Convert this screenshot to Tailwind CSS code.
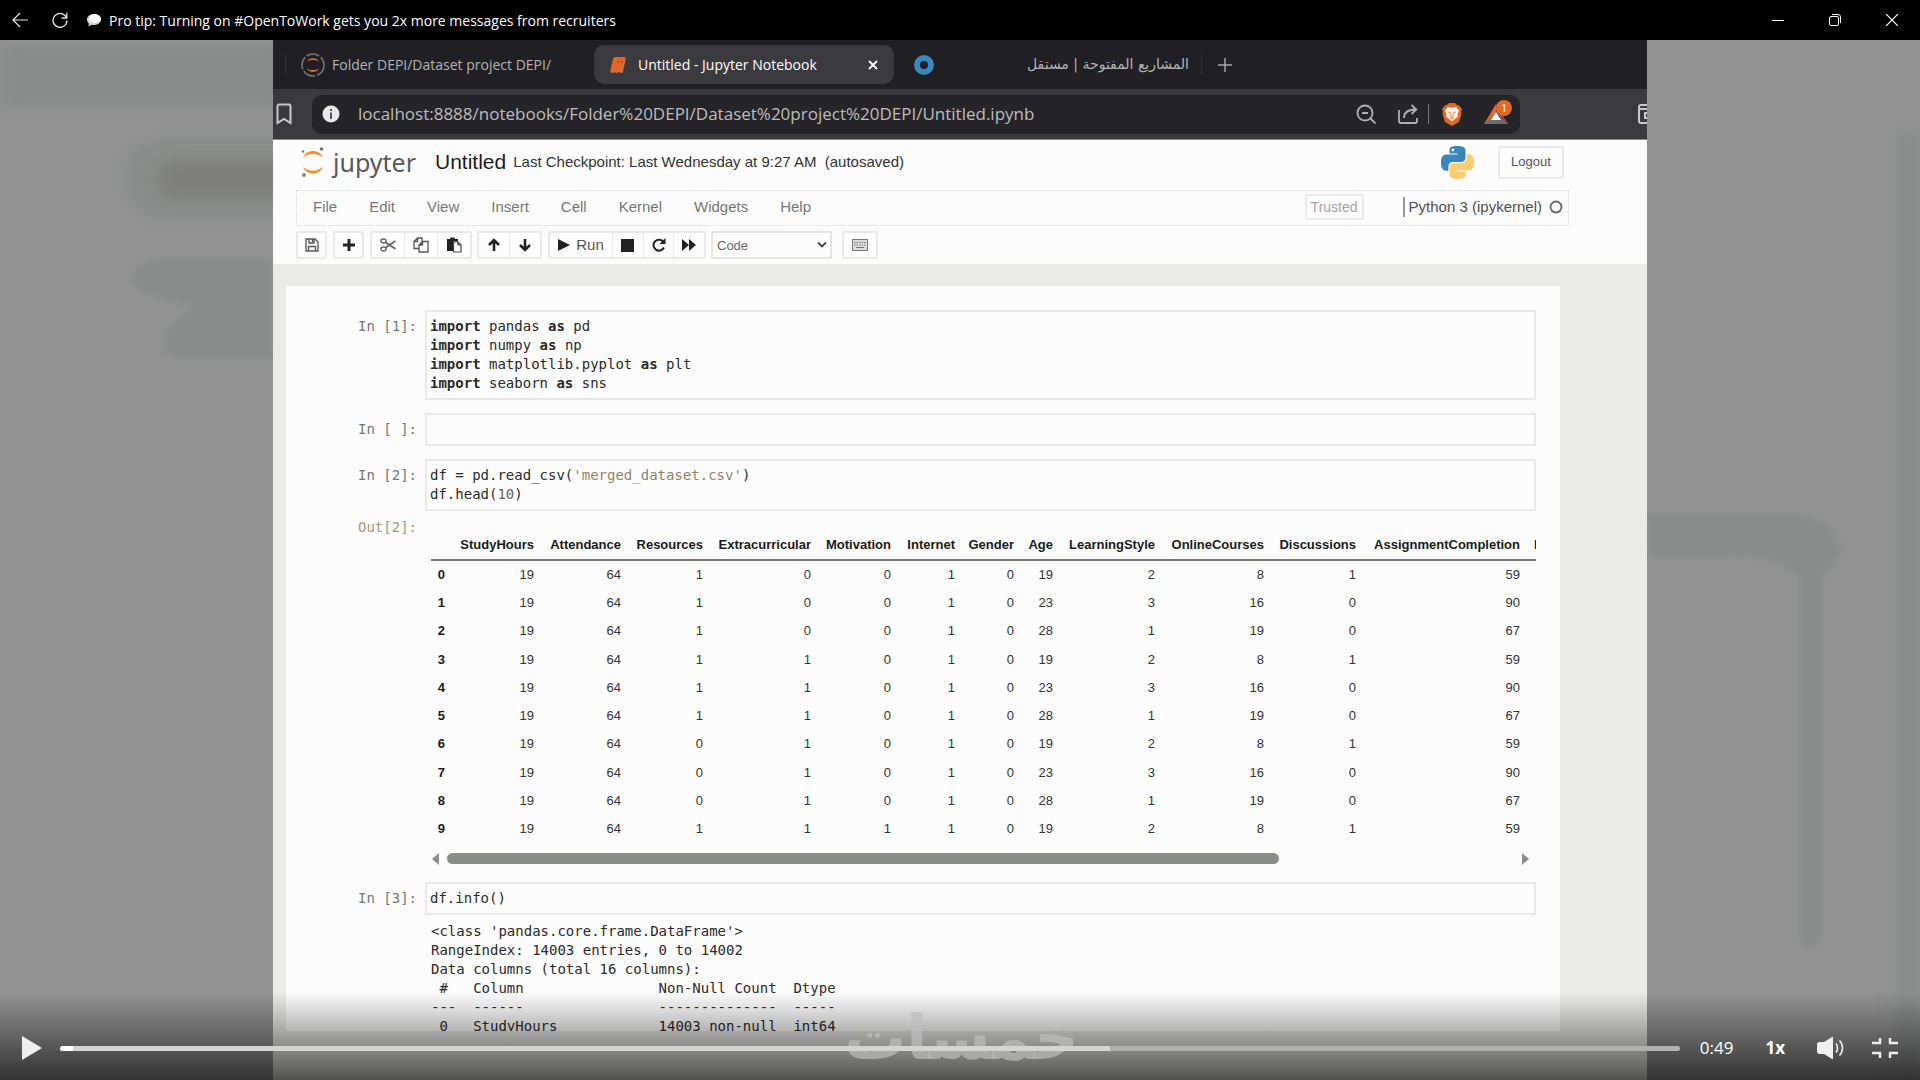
<!DOCTYPE html>
<html lang="en">
<head>
    <meta charset="UTF-8">
    <meta name="viewport" content="width=device-width, initial-scale=1.0">
    <title>Pro tip: Turning on #OpenToWork gets you 2x more messages from recruiters</title>
    <script src="https://cdn.jsdelivr.net/npm/@tailwindcss/browser@4"></script>
</head>
<body class="h-screen flex flex-col bg-black overflow-hidden font-['Open_Sans','Noto_Sans','DejaVu_Sans',sans-serif]">

  <!-- == Window Bar Start == -->
  <header class="h-10 shrink-0 flex items-center text-white">
    <button aria-label="Back" class="w-10 flex justify-center">
      <svg class="size-4" viewBox="0 0 16 16" fill="none" stroke="#e5e5e5" stroke-width="1.2"><path d="M16 8H1M8 1 1 8l7 7"/></svg>
    </button>
    <button aria-label="Reload" class="w-10 flex justify-center">
      <svg class="size-4" viewBox="0 0 16 16" fill="none" stroke="#e5e5e5" stroke-width="1.3"><path d="M14.6 6A7 7 0 1 0 15 8.500M14.800 .8v5.200H9.600"/></svg>
    </button>
    <svg class="size-4 ml-[6px] mr-[7px]" viewBox="0 0 16 16"><path d="M8 2c4 0 7 2.400 7 5.500S12 13 8 13c-.8 0-1.600 0-2.300-.2L2.500 14.500l.3-3C1.600 10.400 1 9 1 7.500 1 4.400 4 2 8 2z" fill="#d4d4d4"/><path d="M8.500 2C5 2 3 4.200 3 6.800c0 2.400 2.600 4 5.400 4S14 9.400 15 7.500C15 4.400 12 2 8.500 2z" fill="#fff"/></svg>
    <h1 class="text-[14px] flex-1">Pro tip: Turning on #OpenToWork gets you 2x more messages from recruiters</h1>
    <button aria-label="Minimize" class="w-[57px] flex justify-center"><svg class="size-3" viewBox="0 0 12 12" stroke="#fff"><path d="M0 6.500h12"/></svg></button>
    <button aria-label="Restore" class="w-[57px] flex justify-center"><svg class="size-3" viewBox="0 0 12 12" fill="none" stroke="#fff"><rect x=".5" y="2.500" width="9" height="9" rx="1.500"/><path d="M3 .5h6a2.500 2.500 0 0 1 2.500 2.500v6"/></svg></button>
    <button aria-label="Close" class="w-[57px] flex justify-center"><svg class="size-3" viewBox="0 0 12 12" fill="none" stroke="#fff" stroke-width="1.200"><path d="m0 0 12 12M12 0 0 12"/></svg></button>
  </header>
  <!-- == Window Bar End == -->

  <main class="relative flex-1 min-h-0 bg-[#939393] overflow-hidden">
    <!-- soft shapes behind the video -->
    <div class="absolute left-0 top-0 w-72 h-18 bg-[#8a8d8b] blur-sm"></div>
    <div class="absolute left-[122px] top-[98px] w-52 h-[82px] rounded-[36px] bg-[#8a8d8b] blur-sm"></div>
    <div class="absolute left-[156px] top-[118px] w-44 h-[42px] rounded-full bg-[#7f807c] blur-sm"></div>
    <svg class="absolute left-0 top-[200px] w-[273px] h-[160px] blur-[3px]" viewBox="0 0 273 160" fill="#8a8d8b"><path d="M273 18H170c-22 0-38 8-40 20 4 14 30 22 64 28-18 12-30 24-32 34 2 16 14 19 28 19h83z"/></svg>
    <svg class="absolute right-0 top-[440px] w-[273px] h-[520px] blur-[3px]" viewBox="0 0 273 520" fill="#8a8d8b"><path d="M0 33h130c38 0 60 14 64 34 0 14-10 22-18 30v360c-4 14-20 14-24 0V97c-12-14-36-19-62-19H0z"/></svg>
    <div class="absolute right-0 top-[86px] w-6 h-full bg-[#8a8d8b] blur-sm"></div>

    <!-- == Video Frame Start == -->
    <section class="relative max-w-[1374px] h-full mx-auto flex flex-col overflow-hidden bg-[#eaeae8]">

      <!-- tabs -->
      <nav class="h-[49px] shrink-0 flex items-center bg-[#201f23] text-[#b4b4b4] text-[14px] font-medium">
        <span class="w-px h-5 ml-3 mr-[15px] bg-[#333237]"></span>
        <a href="#" class="flex items-center w-[293px]">
          <svg class="size-6 mr-[7px]" viewBox="0 0 24 24" fill="none"><circle cx="12" cy="12" r="11" stroke="#77777a" stroke-width="1.500" stroke-dasharray="13 2"/><path d="M5.500 8.500c3-4.500 10-4.500 13 0-4-2-9-2-13 0zM5.500 15.500c3 4.500 10 4.500 13 0-4 2-9 2-13 0z" fill="#e0682b"/></svg>
          Folder DEPI/Dataset project DEPI/
        </a>
        <div class="w-[300px] h-[39px] px-4 flex items-center rounded-[10px] bg-[#3b3a3f] text-white">
          <svg class="size-4 mr-3" viewBox="0 0 16 16"><path d="M5.500 0H14c1.200 0 2 1 1.700 2.200L13 14.500c-.3 1-1 1.500-2 1.500l-2-1-2 1-2-.8-2 .8C1 16 0 15 .3 13.800L3 2C3.300.800 4.200 0 5.500 0z" fill="#e0682b"/><path d="M8 4v2M11.500 4v2" stroke="#8a3c16"/></svg>
          <a href="#" class="flex-1">Untitled - Jupyter Notebook</a>
          <button aria-label="Close tab"><svg class="size-[10px]" viewBox="0 0 10 10" stroke="#fff" stroke-width="1.800"><path d="m1 1 8 8M9 1 1 9"/></svg></button>
        </div>
        <a href="#" class="ml-5 flex items-center w-[275px] justify-between">
          <svg class="size-5" viewBox="0 0 20 20" fill="none"><circle cx="10" cy="10" r="7" stroke="#3987bd" stroke-width="6"/></svg>
          <span dir="rtl" class="font-['DejaVu_Sans',sans-serif]">المشاريع المفتوحة | مستقل</span>
        </a>
        <span class="w-px h-5 ml-3 bg-[#333237]"></span>
        <button aria-label="New tab" class="ml-4"><svg class="size-[14px]" viewBox="0 0 14 14" stroke="#a5a5a5" stroke-width="1.500"><path d="M7 0v14M0 7h14"/></svg></button>
      </nav>

      <!-- address bar -->
      <div class="h-[51px] shrink-0 flex items-center bg-[#3a393e] border-b border-[#8b8b8b]">
        <button aria-label="Bookmark" class="w-[39px] pl-[3px]"><svg class="w-4 h-[22px]" viewBox="0 0 16 22" fill="none" stroke="#c9c9c9" stroke-width="2"><path d="M3 1.500h10a1.500 1.500 0 0 1 1.500 1.500v17L8 16l-6.500 4V3A1.500 1.500 0 0 1 3 1.500z"/></svg></button>
        <div class="w-[1208px] h-[39px] pl-[10px] pr-3 flex items-center rounded-[10px] bg-[#252429]">
          <svg class="size-[18px] mr-[18px]" viewBox="0 0 18 18"><circle cx="9" cy="9" r="8.500" fill="#e9e9e7"/><path d="M9 4v2M9 7.500V14" stroke="#55555a" stroke-width="2"/></svg>
          <input aria-label="Address" value="localhost:8888/notebooks/Folder%20DEPI/Dataset%20project%20DEPI/Untitled.ipynb" class="flex-1 min-w-0 bg-transparent text-[17px] text-[#bdbdbd] outline-none">
          <svg class="size-5 mr-[22px]" viewBox="0 0 20 20" fill="none" stroke="#b0b0b0" stroke-width="1.800"><circle cx="9" cy="9" r="7.500"/><path d="m14.500 14.500 5 5M6 9h6"/></svg>
          <svg class="size-5 mr-[10px]" viewBox="0 0 20 20" fill="none" stroke="#b0b0b0" stroke-width="1.800"><path d="M1 6v11a2 2 0 0 0 2 2h14a2 2 0 0 0 2-2v-3M6 14c0-6 4-8.500 12-8.500M13.500 1l4.800 4.500-4.800 4.500"/></svg>
          <span class="w-px h-5 mr-[13px] bg-[#77777a]"></span>
          <svg class="w-5 h-[23px] mr-[22px]" viewBox="0 0 20 23"><path d="m5 2 2-2h6l2 2 2 .5L20 6l-1 3 .5 2-2.500 8-7 4-7-4L.5 11 1 9 0 6l3-3.500z" fill="#e0682b"/><path d="m6 4 4 .8L14 4l3 3.500-1.500 4 .5 2-3 2.500-3 2.500L7 16l-3-2.500.5-2L3 7.500z" fill="#f6efe6"/><path d="m6 9 2.500 1L9 13l1 2 1-2 .5-3L14 9M8 16l2-1 2 1" fill="none" stroke="#e8a35c" stroke-width="1.200"/></svg>
          <span class="relative">
            <svg class="w-6 h-5" viewBox="0 0 24 20"><path d="M12 0 0 20l5-1 7-11z" fill="#e0682b"/><path d="M12 0v8l7 11 5 1z" fill="#8a4a55"/><path d="m0 20 6-5h12l6 5z" fill="#6c6c70"/><path d="m12 8 5 8H7z" fill="#fff"/></svg>
            <span class="absolute -top-1 left-3 size-4 rounded-full bg-[#e0682b] text-[10px] leading-4 text-center text-white">1</span>
          </span>
        </div>
        <span class="flex-1"></span>
        <svg class="w-[9px] h-5" viewBox="0 0 9 20" fill="none" stroke="#c9c9c9" stroke-width="2"><path d="M9 1H3a2 2 0 0 0-2 2v14a2 2 0 0 0 2 2h6M1 5h8M9 9H7v5h2"/></svg>
      </div>

      <!-- == Jupyter Header Start == -->
      <div class="h-[124px] shrink-0 pl-[23px] pr-[78px] bg-[#fcfcfc] font-['Liberation_Sans',sans-serif] text-[#555]">
        <div class="h-[50px] pb-[6px] flex items-center">
          <svg class="w-6 h-[30px] ml-[5px] mr-2" viewBox="0 0 24 30"><path d="M2 10.500C4 6 8 4 12 4s8 2 10 6.500C18 7.500 15 7 12 7s-6 .5-10 3.500zM2 20c2 4.500 6 6.500 10 6.500S20 24.500 22 20c-4 3-7 3.500-10 3.500S6 23 2 20z" fill="#ee9133"/><circle cx="20.500" cy="2" r="1.800" fill="#777"/><circle cx="2" cy="4.500" r="1.200" fill="#777"/><circle cx="3" cy="28" r="2" fill="#888"/></svg>
          <span class="text-[25px] leading-8 font-['Noto_Sans',sans-serif] text-[#5a5a5a] w-[102px]">jupyter</span>
          <h2 class="text-[21px] text-[#1c1c1c] mr-[7px]">Untitled</h2>
          <p class="text-[15px] text-[#333] flex-1">Last Checkpoint: Last Wednesday at 9:27 AM &nbsp;(autosaved)</p>
          <svg class="size-[33px] mr-6" viewBox="0 0 24 24"><path fill="#3b86b8" d="M14.250.18l.9.2.73.26.59.3.45.32.34.34.25.34.16.33.1.3.04.26.02.2-.01.13V8.500l-.05.63-.13.55-.21.46-.26.38-.3.31-.33.25-.35.19-.35.14-.33.1-.3.07-.26.04-.21.02H8.770l-.69.05-.59.14-.5.22-.41.27-.33.32-.27.35-.2.36-.15.37-.1.35-.07.32-.04.27-.02.21v3.060H3.170l-.21-.03-.28-.07-.32-.12-.35-.18-.36-.26-.36-.36-.35-.46-.32-.59-.28-.73-.21-.88-.14-1.050-.05-1.230.06-1.220.16-1.040.24-.87.32-.71.36-.57.4-.44.42-.33.42-.24.4-.16.36-.1.32-.05.24-.01h.16l.06.01h8.160v-.83H6.180l-.01-2.750-.02-.37.05-.34.11-.31.17-.28.25-.26.31-.23.38-.2.44-.18.51-.15.58-.12.64-.1.71-.06.77-.04.84-.02 1.270.05zm-6.300 1.980l-.23.33-.08.41.08.41.23.34.33.22.41.09.41-.09.33-.22.23-.34.08-.41-.08-.41-.23-.33-.33-.22-.41-.09-.41.09z"/><path fill="#f9cd74" d="M21.100 6.110l.28.06.32.12.35.18.36.27.36.35.35.47.32.59.28.73.21.88.14 1.040.05 1.230-.06 1.230-.16 1.040-.24.86-.32.71-.36.57-.4.45-.42.33-.42.24-.4.16-.36.09-.32.05-.24.02-.16-.01h-8.220v.82h5.840l.01 2.760.02.36-.05.34-.11.31-.17.29-.25.25-.31.24-.38.2-.44.17-.51.15-.58.13-.64.09-.71.07-.77.04-.84.01-1.270-.04-1.070-.14-.9-.2-.73-.25-.59-.3-.45-.33-.34-.34-.25-.34-.16-.33-.1-.3-.04-.25-.02-.2.01-.13v-5.340l.05-.64.13-.54.21-.46.26-.38.3-.32.33-.24.35-.2.35-.14.33-.1.3-.06.26-.04.21-.02.13-.01h5.840l.69-.05.59-.14.5-.21.41-.28.33-.32.27-.35.2-.36.15-.36.1-.35.07-.32.04-.28.02-.21V6.070h2.090l.14.01z"/></svg>
          <button class="w-[66px] h-[33px] mr-[5px] rounded-xs border-2 border-[#e9e9e9] text-[13px]">Logout</button>
        </div>

        <div class="h-[36px] pl-4 pb-[2px] flex items-center border border-dotted border-[#d9d9d9] text-[15px] text-[#777]">
          <div class="flex-1 flex gap-8">
            <a href="#">File</a>
            <a href="#">Edit</a>
            <a href="#">View</a>
            <a href="#">Insert</a>
            <a href="#">Cell</a>
            <a href="#">Kernel</a>
            <a href="#">Widgets</a>
            <a href="#">Help</a>
          </div>
          <span class="w-[59px] h-[26px] flex items-center justify-center rounded-xs border-2 border-[#ebebeb] text-[14px] text-[#a3a3a3] mr-[39px]">Trusted</span>
          <span class="w-[2px] h-5 bg-[#999] mr-1"></span>
          <span class="text-[#505050]">Python 3 (ipykernel)</span>
          <svg class="size-[14px] ml-[7px] mr-[5px]" viewBox="0 0 14 14" fill="none" stroke="#666" stroke-width="1.800"><circle cx="7" cy="7" r="5.500"/></svg>
        </div>

        <div class="h-[38px] pt-[5px] flex items-start text-[#333]">
          <button aria-label="Save" class="w-[31px] h-7 mr-[6px] flex items-center justify-center rounded-xs border-2 border-[#e9e9e9]">
            <svg class="size-[14px]" viewBox="0 0 14 14" fill="none" stroke="#555" stroke-width="1.300"><path d="M1 1h9l3 3v9H1zM4 1v4h5V1M3.500 13V8.500h7V13M7.500 1.500v2.500"/></svg>
          </button>
          <button aria-label="Insert cell below" class="w-[31px] h-7 mr-[6px] flex items-center justify-center rounded-xs border-2 border-[#e9e9e9]">
            <svg class="size-3" viewBox="0 0 12 12" stroke="#222" stroke-width="3"><path d="M6 0v12M0 6h12"/></svg>
          </button>
          <div class="w-[102px] h-7 mr-[5px] flex rounded-xs border-2 border-[#e9e9e9]">
            <button aria-label="Cut" class="flex-1 flex items-center justify-center border-r border-[#e9e9e9]">
              <svg class="size-4" viewBox="0 0 16 16" fill="none" stroke="#666" stroke-width="1.400"><ellipse cx="3.500" cy="4" rx="2.600" ry="2"/><ellipse cx="3.500" cy="12" rx="2.600" ry="2"/><path d="m5.500 5.200 10 6.800M5.500 10.800l10-6.800" stroke-width="1.800"/></svg>
            </button>
            <button aria-label="Copy" class="flex-1 flex items-center justify-center border-r border-[#e9e9e9]">
              <svg class="size-4" viewBox="0 0 16 16" fill="none" stroke="#555" stroke-width="1.300"><path d="M6 11.500H1v-7L4.500 1H9v3M4.500 1v3.500H1M6 8l3.500-3.500H15V15H6zM9.500 4.500V8H6"/></svg>
            </button>
            <button aria-label="Paste" class="flex-1 flex items-center justify-center">
              <svg class="size-4" viewBox="0 0 16 16"><path d="M1 2h3l.5-1.500h4L9 2h3v2.500H7V14H1z" fill="#222"/><path d="M7.500 5H12l3 3v7H7.500zM12 5v3h3" fill="#fcfcfc" stroke="#444" stroke-width="1.200"/></svg>
            </button>
          </div>
          <div class="w-[65px] h-7 mr-[6px] flex rounded-xs border-2 border-[#e9e9e9]">
            <button aria-label="Move up" class="flex-1 flex items-center justify-center border-r border-[#e9e9e9]">
              <svg class="size-[14px]" viewBox="0 0 14 14" fill="none" stroke="#222" stroke-width="2.600"><path d="M7 13V2M2 7l5-5 5 5"/></svg>
            </button>
            <button aria-label="Move down" class="flex-1 flex items-center justify-center">
              <svg class="size-[14px]" viewBox="0 0 14 14" fill="none" stroke="#222" stroke-width="2.600"><path d="M7 1v11M2 7l5 5 5-5"/></svg>
            </button>
          </div>
          <div class="w-[158px] h-7 mr-[5px] flex rounded-xs border-2 border-[#e9e9e9]">
            <button class="w-[63px] flex items-center justify-center gap-[6px] border-r border-[#e9e9e9] text-[15px] text-[#555]">
              <svg class="size-3" viewBox="0 0 12 12" fill="#222"><path d="m0 0 12 6-12 6z"/></svg>Run
            </button>
            <button aria-label="Interrupt" class="flex-1 flex items-center justify-center border-r border-[#e9e9e9]"><span class="size-[13px] bg-[#222]"></span></button>
            <button aria-label="Restart" class="flex-1 flex items-center justify-center border-r border-[#e9e9e9]">
              <svg class="size-[14px]" viewBox="0 0 14 14" fill="none" stroke="#222" stroke-width="2"><path d="M11.500 4A5.500 5.500 0 1 0 12 9.500"/><path d="M13.500 0v6h-6z" fill="#222" stroke="none"/></svg>
            </button>
            <button aria-label="Restart and run all" class="flex-1 flex items-center justify-center">
              <svg class="w-[14px] h-3" viewBox="0 0 14 12" fill="#222"><path d="m0 0 7 6-7 6zM7 0l7 6-7 6z"/></svg>
            </button>
          </div>
          <div class="relative w-[121px] h-7 mr-[10px]">
            <select aria-label="Cell type" class="appearance-none w-full h-full pl-1 pt-[2px] rounded-xs border-2 border-[#e3e3e3] text-[13px] text-[#666]">
              <option>Code</option>
              <option>Markdown</option>
            </select>
            <svg class="absolute right-[5px] top-[10px] w-[10px] h-2" viewBox="0 0 10 8" fill="none" stroke="#444" stroke-width="1.800"><path d="m1 1.500 4 4 4-4"/></svg>
          </div>
          <button aria-label="Command palette" class="w-[36px] h-7 flex items-center justify-center rounded-xs border-2 border-[#e9e9e9]">
            <svg class="w-4 h-3" viewBox="0 0 16 12" fill="none" stroke="#777"><rect x=".5" y=".5" width="15" height="11" fill="#ddd"/><path d="M2 3.500h12M2 6h12" stroke-dasharray="1.500 1"/><path d="M4 8.500h8"/></svg>
          </button>
        </div>
      </div>
      <!-- == Jupyter Header End == -->

      <!-- == Notebook Start == -->
      <div class="flex-1 min-h-0 mt-[22px] mb-[49px] ml-[13px] mr-[87px] pt-6 pr-6 overflow-hidden bg-[#fcfcfc] font-['DejaVu_Sans_Mono',monospace] text-[14px] leading-[19px] text-[#2a2a2a]">

        <div class="flex mb-[13px]">
          <div class="w-[139px] shrink-0 pt-[7px] pr-2 text-right text-[#777]">In [1]:</div>
          <pre class="flex-1 p-[5px] pl-[3px] font-['DejaVu_Sans_Mono',monospace] border-2 border-[#e9e9e8]"><b>import</b> pandas <b>as</b> pd
<b>import</b> numpy <b>as</b> np
<b>import</b> matplotlib.pyplot <b>as</b> plt
<b>import</b> seaborn <b>as</b> sns</pre>
        </div>

        <div class="flex mb-[13px]">
          <div class="w-[139px] shrink-0 pt-[7px] pr-2 text-right text-[#777] whitespace-pre">In [ ]:</div>
          <div class="flex-1 h-[33px] border-2 border-[#e9e9e8]"></div>
        </div>

        <div class="flex">
          <div class="w-[139px] shrink-0 pt-[7px] pr-2 text-right text-[#777]">In [2]:</div>
          <pre class="flex-1 p-[5px] pl-[3px] font-['DejaVu_Sans_Mono',monospace] border-2 border-[#e9e9e8]">df = pd.read_csv(<span class="text-[#8f8468]">'merged_dataset.csv'</span>)
df.head(<span class="text-[#666]">10</span>)</pre>
        </div>

        <div class="flex mb-[18px]">
          <div class="w-[139px] shrink-0 pt-[7px] pr-2 text-right text-[#a8977c]">Out[2]:</div>
          <div class="flex-1 min-w-0 pt-[19px] pl-[6px]">
            <div class="overflow-hidden">
              <table class="table-fixed w-[1186px] h-[314px] font-['Liberation_Sans',sans-serif] text-[13px] text-right text-[#333]">
                <colgroup>
                  <col class="w-[21px]"><col class="w-[89px]"><col class="w-[87px]"><col class="w-[82px]"><col class="w-[108px]"><col class="w-[80px]"><col class="w-[64px]"><col class="w-[59px]"><col class="w-[39px]"><col class="w-[102px]"><col class="w-[109px]"><col class="w-[92px]"><col class="w-[164px]"><col class="w-[90px]">
                </colgroup>
                <thead>
                  <tr id="tableHead" class="h-[30px] border-b-2 border-[#777] text-[#1a1a1a]"></tr>
                </thead>
                <tbody id="tableBody"></tbody>
              </table>
            </div>
            <div class="h-[11px] mt-[9px] flex items-center">
              <svg class="w-[7px] h-3 ml-px" viewBox="0 0 7 12" fill="#8b8d8b"><path d="M7 0v12L0 6z"/></svg>
              <div class="flex-1 mx-[8px]"><div class="h-[11px] w-[78%] rounded-full bg-[#8b8d8b]"></div></div>
              <svg class="w-[7px] h-3 mr-[7px]" viewBox="0 0 7 12" fill="#8b8d8b"><path d="M0 0v12l7-6z"/></svg>
            </div>
          </div>
        </div>

        <div class="flex mb-[7px]">
          <div class="w-[139px] shrink-0 pt-[7px] pr-2 text-right text-[#777]">In [3]:</div>
          <pre class="flex-1 p-[5px] pl-[3px] font-['DejaVu_Sans_Mono',monospace] border-2 border-[#e9e9e8]">df.info()</pre>
        </div>

        <pre class="pl-[145px] font-['DejaVu_Sans_Mono',monospace]">&lt;class 'pandas.core.frame.DataFrame'&gt;
RangeIndex: 14003 entries, 0 to 14002
Data columns (total 16 columns):
 #   Column                Non-Null Count  Dtype
---  ------                --------------  -----
 0   StudyHours            14003 non-null  int64</pre>
      </div>
      <!-- == Notebook End == -->
    </section>
    <!-- == Video Frame End == -->

    <!-- == Player Controls Start == -->
    <div class="absolute inset-x-0 bottom-0 h-22 bg-linear-to-t from-black/65 to-transparent"></div>
    <div class="absolute left-[844px] bottom-[2px] font-['DejaVu_Sans',sans-serif] font-bold text-[62px] leading-[80px] text-[#bdbdbd]/70" dir="rtl">خمسات</div>
    <div class="absolute inset-x-0 bottom-0 h-16 px-[22px] flex items-center text-white">
      <button aria-label="Play" class="w-[38px]"><svg class="w-5 h-6" viewBox="0 0 20 24" fill="#eee"><path d="m0 0 20 12L0 24z"/></svg></button>
      <input type="range" aria-label="Seek" min="0" max="100" value="1" class="flex-1 min-w-0 h-[5px] appearance-none rounded-full bg-[linear-gradient(to_right,#fff_13px,#d4d4d2_13px,#d4d4d2_1050px,#b0b0b0_1050px)] [&::-webkit-slider-thumb]:appearance-none [&::-webkit-slider-thumb]:w-0">
      <span class="ml-5 text-[17px]">0:49</span>
      <button class="ml-8 text-[17px] font-bold">1x</button>
      <button aria-label="Volume" class="ml-8"><svg class="w-[27px] h-[22px]" viewBox="0 0 27 22" fill="#eee"><path d="M2.500 5H7l8-5h1v22h-1l-8-5H2.500C1 17 0 16 0 14.500v-7C0 6 1 5 2.500 5z"/><path d="M19 6.500c2 2.500 2 6.500 0 9M22.500 3.500c4 4 4 11 0 15" fill="none" stroke="#eee" stroke-width="1.600"/></svg></button>
      <button aria-label="Exit full screen" class="ml-7"><svg class="w-[26px] h-5" viewBox="0 0 26 20" fill="none" stroke="#eee" stroke-width="2.400"><path d="M8 0v5H0M18 0v5h8M8 20v-5H0M18 20v-5h8"/></svg></button>
    </div>
    <!-- == Player Controls End == -->
  </main>

  <script>
    const columns = ['', 'StudyHours', 'Attendance', 'Resources', 'Extracurricular', 'Motivation', 'Internet', 'Gender', 'Age', 'LearningStyle', 'OnlineCourses', 'Discussions', 'AssignmentCompletion', 'ExamScore'];

    const rows = [
      [19, 64, 1, 0, 0, 1, 0, 19, 2, 8, 1, 59],
      [19, 64, 1, 0, 0, 1, 0, 23, 3, 16, 0, 90],
      [19, 64, 1, 0, 0, 1, 0, 28, 1, 19, 0, 67],
      [19, 64, 1, 1, 0, 1, 0, 19, 2, 8, 1, 59],
      [19, 64, 1, 1, 0, 1, 0, 23, 3, 16, 0, 90],
      [19, 64, 1, 1, 0, 1, 0, 28, 1, 19, 0, 67],
      [19, 64, 0, 1, 0, 1, 0, 19, 2, 8, 1, 59],
      [19, 64, 0, 1, 0, 1, 0, 23, 3, 16, 0, 90],
      [19, 64, 0, 1, 0, 1, 0, 28, 1, 19, 0, 67],
      [19, 64, 1, 1, 1, 1, 0, 19, 2, 8, 1, 59]
    ];

    document.getElementById('tableHead').innerHTML = columns.map((name, i) =>
      `<th class="${i === 13 ? 'pl-[7px] text-left' : 'pr-[7px]'} font-bold whitespace-nowrap">${name}</th>`
    ).join('');

    document.getElementById('tableBody').innerHTML = rows.map((row, i) =>
      `<tr><th class="pr-[7px] pb-[2px] font-bold text-[#1a1a1a]">${i}</th>${row.map(v => `<td class="pr-[7px] pb-[2px] text-[13px]">${v}</td>`).join('')}<td></td></tr>`
    ).join('');
  </script>
</body>
</html>
